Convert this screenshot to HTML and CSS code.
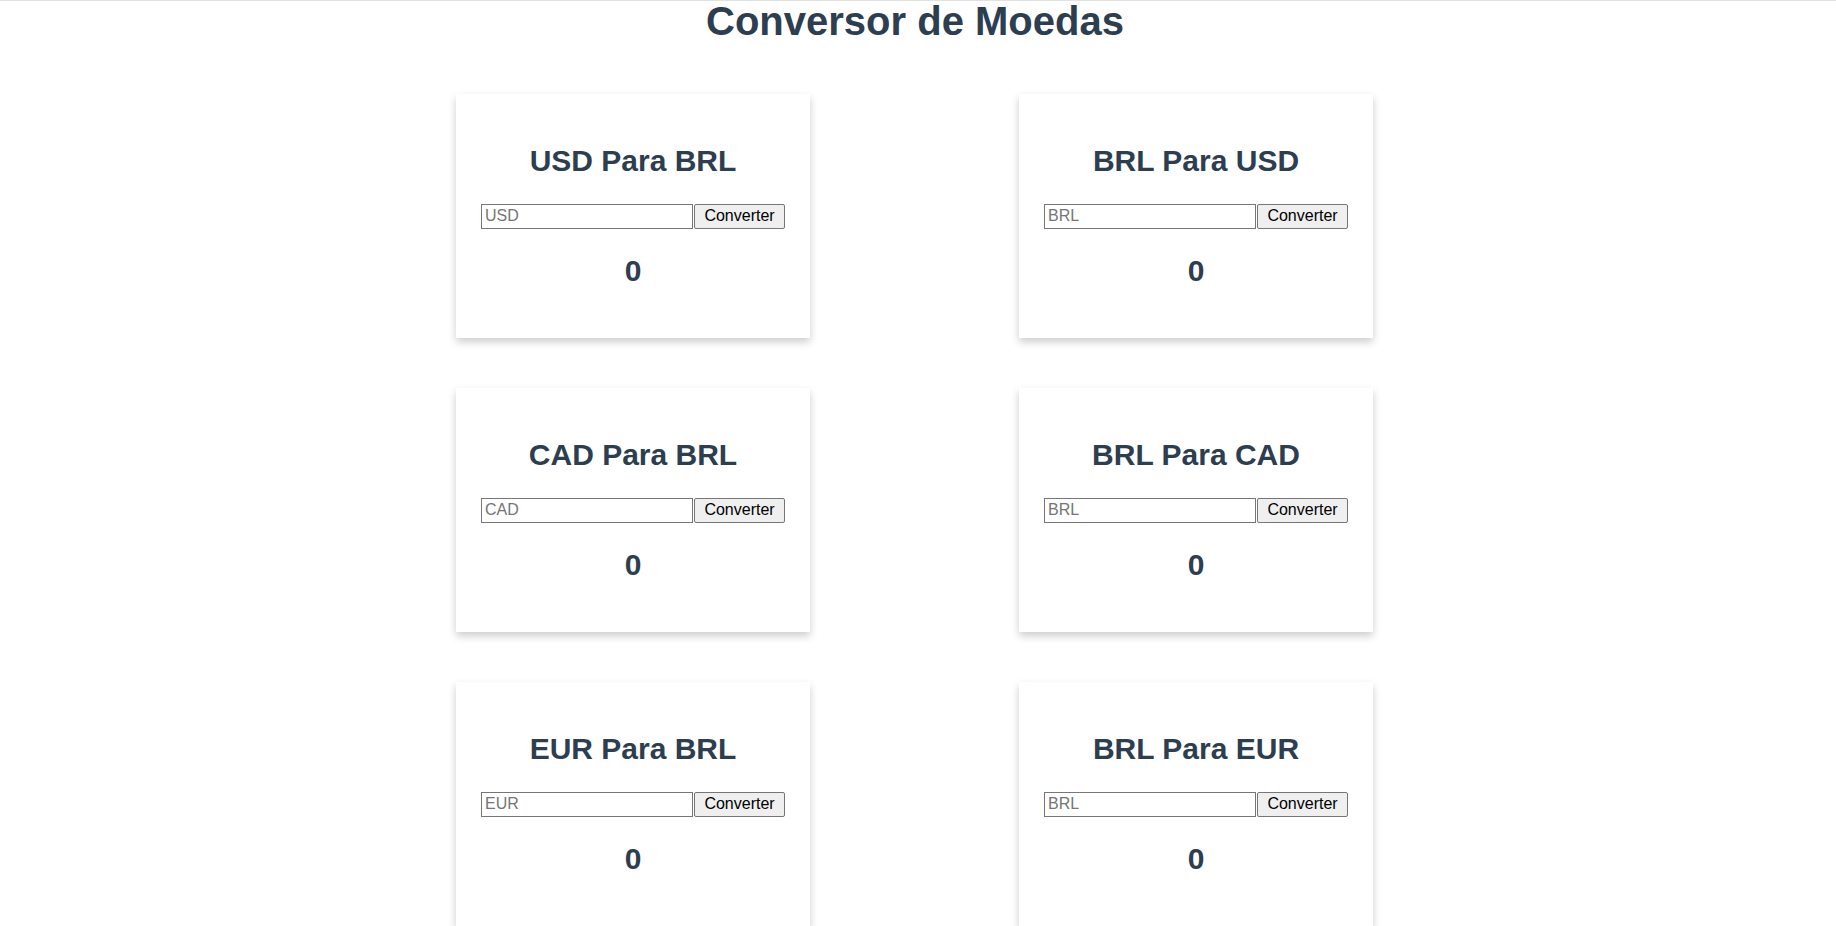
FILE: index.html
```html
<!DOCTYPE html>
<html lang="pt-BR">
<head>
<meta charset="utf-8">
<title>Conversor de Moedas</title>
<link rel="stylesheet" href="styles.css">
</head>
<body>
<h1 class="page-title">Conversor de Moedas</h1>
<main class="grid">
  <section class="card">
    <h2 class="card-title">USD Para BRL</h2>
    <div class="form-row"><input class="amount" type="text" placeholder="USD"><button class="convert">Converter</button></div>
    <h2 class="result">0</h2>
  </section>
  <section class="card">
    <h2 class="card-title">BRL Para USD</h2>
    <div class="form-row"><input class="amount" type="text" placeholder="BRL"><button class="convert">Converter</button></div>
    <h2 class="result">0</h2>
  </section>
  <section class="card">
    <h2 class="card-title">CAD Para BRL</h2>
    <div class="form-row"><input class="amount" type="text" placeholder="CAD"><button class="convert">Converter</button></div>
    <h2 class="result">0</h2>
  </section>
  <section class="card">
    <h2 class="card-title">BRL Para CAD</h2>
    <div class="form-row"><input class="amount" type="text" placeholder="BRL"><button class="convert">Converter</button></div>
    <h2 class="result">0</h2>
  </section>
  <section class="card">
    <h2 class="card-title">EUR Para BRL</h2>
    <div class="form-row"><input class="amount" type="text" placeholder="EUR"><button class="convert">Converter</button></div>
    <h2 class="result">0</h2>
  </section>
  <section class="card">
    <h2 class="card-title">BRL Para EUR</h2>
    <div class="form-row"><input class="amount" type="text" placeholder="BRL"><button class="convert">Converter</button></div>
    <h2 class="result">0</h2>
  </section>
</main>
</body>
</html>
```
FILE: styles.css
```css
html, body {
  margin: 0;
  padding: 0;
  background: #ffffff;
}

body {
  font-family: "Liberation Sans", Arial, sans-serif;
  color: #2c3e50;
  border-top: 1px solid #e2e2e2;
}

.page-title {
  margin: 0;
  font-size: 40px;
  line-height: 40px;
  font-weight: bold;
  text-align: center;
  color: #2c3e50;
  padding-right: 6px;
}

.grid {
  display: grid;
  grid-template-columns: repeat(2, 354px);
  column-gap: 209px;
  row-gap: 50px;
  justify-content: center;
  margin-top: 53px;
  padding-right: 7px;
  padding-bottom: 50px;
}

.card {
  background: #ffffff;
  box-sizing: border-box;
  width: 354px;
  height: 244px;
  padding: 25px;
  box-shadow: 0 4px 8px 0 rgba(0, 0, 0, 0.2);
  text-align: center;
}

.card-title,
.result {
  margin: 25px 0;
  font-size: 30px;
  font-weight: bold;
  line-height: 34.5px;
  color: #2c3e50;
}

.form-row {
  display: flex;
  justify-content: center;
  gap: 1px;
}

.amount {
  box-sizing: border-box;
  width: 212px;
  height: 25px;
  margin: 0;
  padding: 1px 3px;
  border: 1px solid #767676;
  border-radius: 0;
  font-family: "Liberation Sans", Arial, sans-serif;
  font-size: 16px;
  color: #000000;
  background: #ffffff;
}

.amount::placeholder {
  color: #757575;
}

.convert {
  box-sizing: border-box;
  width: 92px;
  height: 25px;
  margin: 0;
  padding: 1px 6px;
  border: 1px solid #767676;
  border-radius: 2px;
  background: #efefef;
  font-family: "Liberation Sans", Arial, sans-serif;
  font-size: 16px;
  color: #000000;
}
```
